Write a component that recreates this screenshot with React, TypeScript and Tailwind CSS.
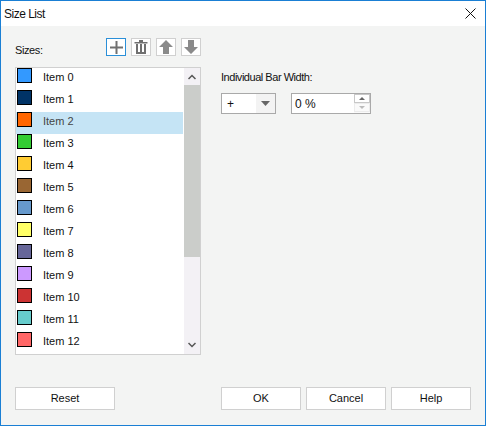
import React from 'react';

const items = [
  { name: 'Item 0', color: 'bg-[#3399ff]' },
  { name: 'Item 1', color: 'bg-[#003366]' },
  { name: 'Item 2', color: 'bg-[#ff6600]' },
  { name: 'Item 3', color: 'bg-[#33cc33]' },
  { name: 'Item 4', color: 'bg-[#ffcc33]' },
  { name: 'Item 5', color: 'bg-[#996633]' },
  { name: 'Item 6', color: 'bg-[#6699cc]' },
  { name: 'Item 7', color: 'bg-[#ffff66]' },
  { name: 'Item 8', color: 'bg-[#666699]' },
  { name: 'Item 9', color: 'bg-[#cc99ff]' },
  { name: 'Item 10', color: 'bg-[#cc3333]' },
  { name: 'Item 11', color: 'bg-[#66cccc]' },
  { name: 'Item 12', color: 'bg-[#ff6666]' },
];

function ToolButton({ active, children }: { active?: boolean; children: React.ReactNode }) {
  return (
    <div className={`w-5 h-[18px] bg-white border flex items-center justify-center ${active ? 'border-[#2a8fd8]' : 'border-[#d0d0d0]'}`}>
      {children}
    </div>
  );
}

function DialogButton({ label, width }: { label: string; width: string }) {
  return (
    <div className={`${width} h-[23px] bg-white border border-[#d0d0d0] flex items-center justify-center text-[#111]`}>
      {label}
    </div>
  );
}

export default function App() {
  return (
    <div className="w-[486px] h-[426px] flex flex-col bg-[#f3f4f3] border border-[#1a7fd4] overflow-hidden font-['Liberation_Sans',sans-serif] text-[11px] text-[#111]">
      {/* Title bar */}
      <div className="h-[25px] shrink-0 bg-white flex items-center justify-between pl-[3px] pr-[9px]">
        <span className="text-[12px] leading-none tracking-[-0.5px]">Size List</span>
        <svg width="11" height="11" viewBox="0 0 11 11" stroke="#111" strokeWidth="1" fill="none">
          <path d="M0.5 0.5 L10.5 10.5 M10.5 0.5 L0.5 10.5" />
        </svg>
      </div>

      {/* Main */}
      <div className="flex-1 flex pl-[14px]">
        <div className="w-[186px] pt-[12px]">
          <div className="flex items-center justify-between h-[18px]">
            <span className="relative top-[3px] tracking-[-0.4px]">Sizes:</span>
            <div className="flex gap-[5px]">
              <ToolButton active>
                <svg width="13" height="13" viewBox="0 0 13 13" fill="#707070">
                  <rect x="5.5" y="0" width="2" height="13" />
                  <rect x="0" y="5.5" width="13" height="2" />
                </svg>
              </ToolButton>
              <ToolButton>
                <svg width="14" height="14" viewBox="0 0 14 14" fill="#707070">
                  <rect x="0.5" y="2" width="13" height="1.5" />
                  <rect x="5" y="0" width="4" height="2" />
                  <path d="M2 4 H4 V12 H6 V4 H8 V12 H10 V4 H12 V14 H2 Z" />
                </svg>
              </ToolButton>
              <ToolButton>
                <svg width="14" height="14" viewBox="0 0 14 14" fill="#8a8a8a">
                  <path d="M7 0 L14 7 H10 V14 H4 V7 H0 Z" />
                </svg>
              </ToolButton>
              <ToolButton>
                <svg width="14" height="14" viewBox="0 0 14 14" fill="#8a8a8a">
                  <path d="M7 14 L14 7 H10 V0 H4 V7 H0 Z" />
                </svg>
              </ToolButton>
            </div>
          </div>

          {/* List */}
          <div className="mt-[11px] h-[288px] bg-white border border-[#d0d0d0] flex">
            <div className="flex-1 min-w-0">
              {items.map((item, i) => (
                <div key={item.name} className={`h-[22px] flex items-start pl-[1px] ${i === 2 ? 'bg-[#c5e4f5] text-[#444]' : ''}`}>
                  <div className={`w-[15px] h-[15px] border border-black ${item.color}`} />
                  <span className="ml-[11px] leading-[18px] h-[22px]">{item.name}</span>
                </div>
              ))}
            </div>
            <div className="w-[16px] ml-[1px] shrink-0 bg-[#f3f1f5] flex flex-col">
              <div className="h-[17px] flex items-center justify-center">
                <svg width="8" height="6" viewBox="0 0 8 6" fill="none" stroke="#555" strokeWidth="1.5">
                  <path d="M0.5 5 L4 1.5 L7.5 5" />
                </svg>
              </div>
              <div className="h-[172px] bg-[#cbcdca]" />
              <div className="flex-1 flex items-end justify-center pb-[6px]">
                <svg width="8" height="6" viewBox="0 0 8 6" fill="none" stroke="#555" strokeWidth="1.5">
                  <path d="M0.5 1 L4 4.5 L7.5 1" />
                </svg>
              </div>
            </div>
          </div>
        </div>

        {/* Right side */}
        <div className="ml-[20px] pt-[42px]">
          <div className="leading-[18px] h-[16px] tracking-[-0.47px] whitespace-nowrap">Individual Bar Width:</div>
          <div className="mt-[9px] flex gap-[15px]">
            <div className="w-[55px] h-[21px] bg-white border border-[#a9a9a9] flex items-stretch">
              <span className="flex-1 pl-[5px] leading-[20px] text-[12px]">+</span>
              <div className="w-[19px] bg-[#f3f3f3] flex items-center justify-center">
                <svg width="9" height="5" viewBox="0 0 9 5" fill="#666">
                  <path d="M0 0 H9 L4.5 5 Z" />
                </svg>
              </div>
            </div>
            <div className="w-[80px] h-[21px] bg-white border border-[#a9a9a9] flex items-stretch">
              <span className="flex-1 pl-[3px] leading-[20px] text-[12px]">0 %</span>
              <div className="w-[16px] flex flex-col bg-[#fafafa]">
                <div className="h-[9px] border border-[#c8c8c8] flex items-center justify-center bg-white">
                  <svg width="6" height="3" viewBox="0 0 6 3" fill="#666">
                    <path d="M0 3 H6 L3 0 Z" />
                  </svg>
                </div>
                <div className="h-[9px] border border-[#ececec] flex items-center justify-center">
                  <svg width="6" height="3" viewBox="0 0 6 3" fill="#bbb">
                    <path d="M0 0 H6 L3 3 Z" />
                  </svg>
                </div>
              </div>
            </div>
          </div>
        </div>
      </div>

      {/* Footer */}
      <div className="h-[23px] shrink-0 mb-[15px] flex pl-[14px]">
        <DialogButton label="Reset" width="w-[100px]" />
        <div className="ml-[106px] flex gap-[5px]">
          <DialogButton label="OK" width="w-[80px]" />
          <DialogButton label="Cancel" width="w-[80px]" />
          <DialogButton label="Help" width="w-[80px]" />
        </div>
      </div>
    </div>
  );
}
